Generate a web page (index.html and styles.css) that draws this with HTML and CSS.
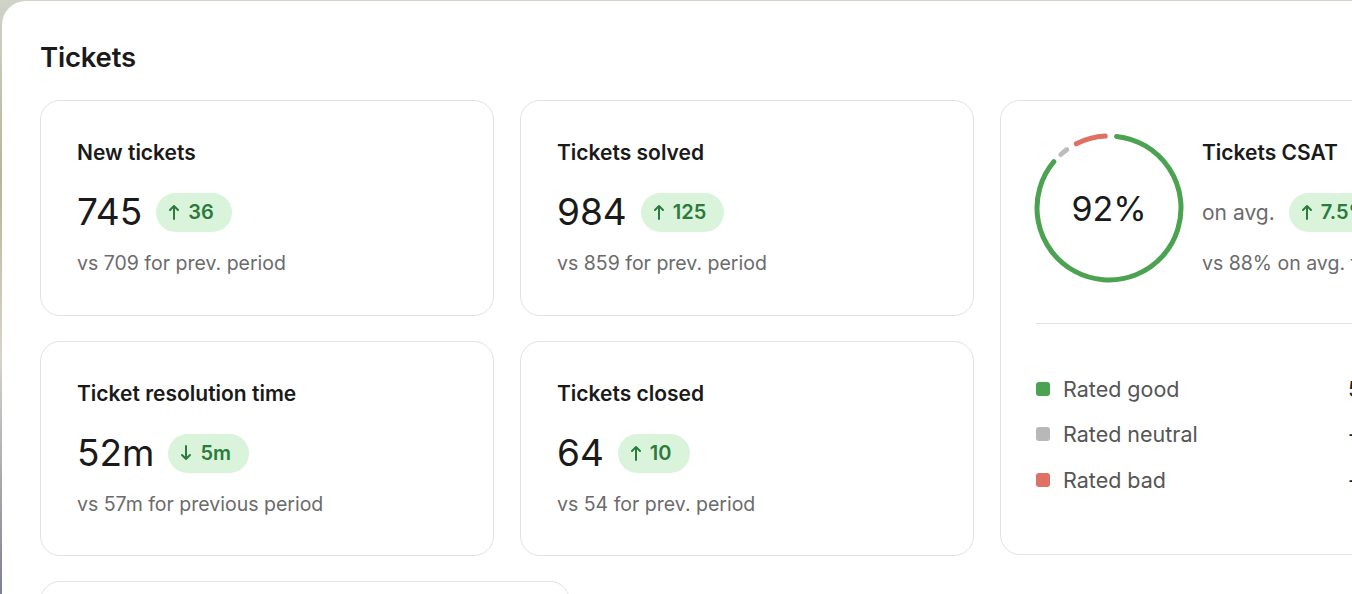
FILE: index.html
```html
<!DOCTYPE html>
<html>
<head>
<meta charset="utf-8">
<link rel="stylesheet" href="styles.css">
</head>
<body>
<div class="panel">
  <h1 class="heading">Tickets</h1>
  <div class="grid">
    <div class="card stat">
      <div class="title">New tickets</div>
      <div class="value-row"><span class="num">745</span><span class="badge"><svg class="arr" viewBox="0 0 10 16"><path d="M5 15V2M1 6l4-4 4 4"/></svg>36</span></div>
      <div class="sub">vs 709 for prev. period</div>
    </div>
    <div class="card stat">
      <div class="title">Tickets solved</div>
      <div class="value-row"><span class="num">984</span><span class="badge"><svg class="arr" viewBox="0 0 10 16"><path d="M5 15V2M1 6l4-4 4 4"/></svg>125</span></div>
      <div class="sub">vs 859 for prev. period</div>
    </div>
    <div class="card csat">
      <div class="csat-top">
        <div class="ring">
          <svg viewBox="0 0 150 150" width="150" height="150">
            <path class="seg green" d="M82.53 3.40A72 72 0 1 1 19.85 28.72"/>
            <path class="seg grey" d="M26.82 21.49A72 72 0 0 1 32.68 16.75"/>
            <path class="seg red" d="M42.31 10.85A72 72 0 0 1 71.23 3.10"/>
          </svg>
          <span class="ring-label">92%</span>
        </div>
        <div class="csat-info">
          <div class="title">Tickets CSAT</div>
          <div class="value-row"><span class="avg">on avg.</span><span class="badge"><svg class="arr" viewBox="0 0 10 16"><path d="M5 15V2M1 6l4-4 4 4"/></svg>7.5%</span></div>
          <div class="sub">vs 88% on avg. for prev. period</div>
        </div>
      </div>
      <div class="divider"></div>
      <ul class="legend">
        <li><span class="dot d-green"></span><span class="lab">Rated good</span><span class="val">512</span></li>
        <li><span class="dot d-grey"></span><span class="lab">Rated neutral</span><span class="val">-</span></li>
        <li><span class="dot d-red"></span><span class="lab">Rated bad</span><span class="val">-</span></li>
      </ul>
    </div>
    <div class="card stat">
      <div class="title">Ticket resolution time</div>
      <div class="value-row"><span class="num">52m</span><span class="badge"><svg class="arr" viewBox="0 0 10 16"><path d="M5 1v13M1 10l4 4 4-4"/></svg>5m</span></div>
      <div class="sub">vs 57m for previous period</div>
    </div>
    <div class="card stat">
      <div class="title">Tickets closed</div>
      <div class="value-row"><span class="num">64</span><span class="badge"><svg class="arr" viewBox="0 0 10 16"><path d="M5 15V2M1 6l4-4 4 4"/></svg>10</span></div>
      <div class="sub">vs 54 for prev. period</div>
    </div>
  </div>
  <div class="card wide"></div>
</div>
</body>
</html>
```
FILE: styles.css
```css
html, body {
  margin: 0;
  height: 100%;
  overflow: hidden;
}
body {
  background: linear-gradient(180deg, #cfd3c8 0%, #b9b49a 30%, #d8d4c8 60%, #7e8096 100%);
  font-family: Inter, "Noto Sans", sans-serif;
  color: #1a1a1a;
}
.panel {
  margin: 1px 0 0 2px;
  background: #fff;
  border-top-left-radius: 24px;
  min-height: 100%;
  padding: 40px 0 0 38px;
  width: 1500px;
  box-sizing: border-box;
}
.heading {
  margin: 0 0 27px 0;
  font-size: 27.5px;
  line-height: 32px;
  font-weight: 600;
  letter-spacing: -0.2px;
}
.grid {
  display: grid;
  grid-template-columns: 454px 454px 454px;
  grid-template-rows: 216px 215px;
  column-gap: 26px;
  row-gap: 25px;
}
.card {
  border: 1px solid #e2e2e2;
  border-radius: 20px;
  box-sizing: border-box;
  background: #fff;
}
.stat {
  padding: 38px 36px 0 36px;
}
.title {
  font-size: 21px;
  line-height: 28px;
  font-weight: 600;
  color: #1a1a1a;
}
.value-row {
  display: flex;
  align-items: center;
  gap: 14px;
  margin-top: 25px;
  height: 40px;
}
.num {
  font-size: 37px;
  line-height: 40px;
  font-weight: 400;
  color: #1a1a1a;
}
.badge {
  display: inline-flex;
  align-items: center;
  gap: 9px;
  height: 39px;
  padding: 0 18px 0 13px;
  border-radius: 20px;
  background: #d9f4db;
  color: #2c7a3c;
  font-size: 20px;
  font-weight: 600;
}
.arr {
  width: 10px;
  height: 16px;
  fill: none;
  stroke: #2c7a3c;
  stroke-width: 2;
  stroke-linecap: round;
  stroke-linejoin: round;
}
.sub {
  margin-top: 19px;
  font-size: 19.5px;
  line-height: 24px;
  color: #6b6b6b;
}
.csat {
  grid-column: 3;
  grid-row: 1 / span 2;
  height: 455px;
  padding: 32px 35px 0 35px;
}
.csat-top {
  display: flex;
  gap: 18px;
}
.ring {
  display: grid;
  place-items: center;
  width: 150px;
  height: 150px;
  margin-left: -2px;
  flex: none;
}
.ring > * {
  grid-area: 1 / 1;
}
.seg {
  fill: none;
  stroke-width: 5;
  stroke-linecap: round;
}
.green { stroke: #4ba351; }
.grey { stroke: #bdbdbd; }
.red { stroke: #e06f64; }
.ring-label {
  font-size: 34px;
  font-weight: 400;
  color: #1a1a1a;
}
.csat-info {
  padding-top: 6px;
  white-space: nowrap;
}
.avg {
  font-size: 21px;
  color: #6b6b6b;
}
.divider {
  height: 1px;
  background: #e4e4e4;
  margin-top: 40px;
}
.legend {
  list-style: none;
  margin: 42px 0 0 0;
  padding: 0;
}
.legend li {
  display: flex;
  align-items: center;
  height: 45.5px;
}
.dot {
  width: 14px;
  height: 14px;
  border-radius: 3px;
  margin-right: 13px;
  flex: none;
}
.d-green { background: #4ba351; }
.d-grey { background: #b8b8b8; }
.d-red { background: #e06f64; }
.lab {
  font-size: 21.5px;
  color: #555;
  flex: 1;
}
.val {
  width: 70px;
  font-size: 21.5px;
  color: #1a1a1a;
}
.wide {
  margin-top: 25px;
  width: 530px;
  height: 120px;
}
```
